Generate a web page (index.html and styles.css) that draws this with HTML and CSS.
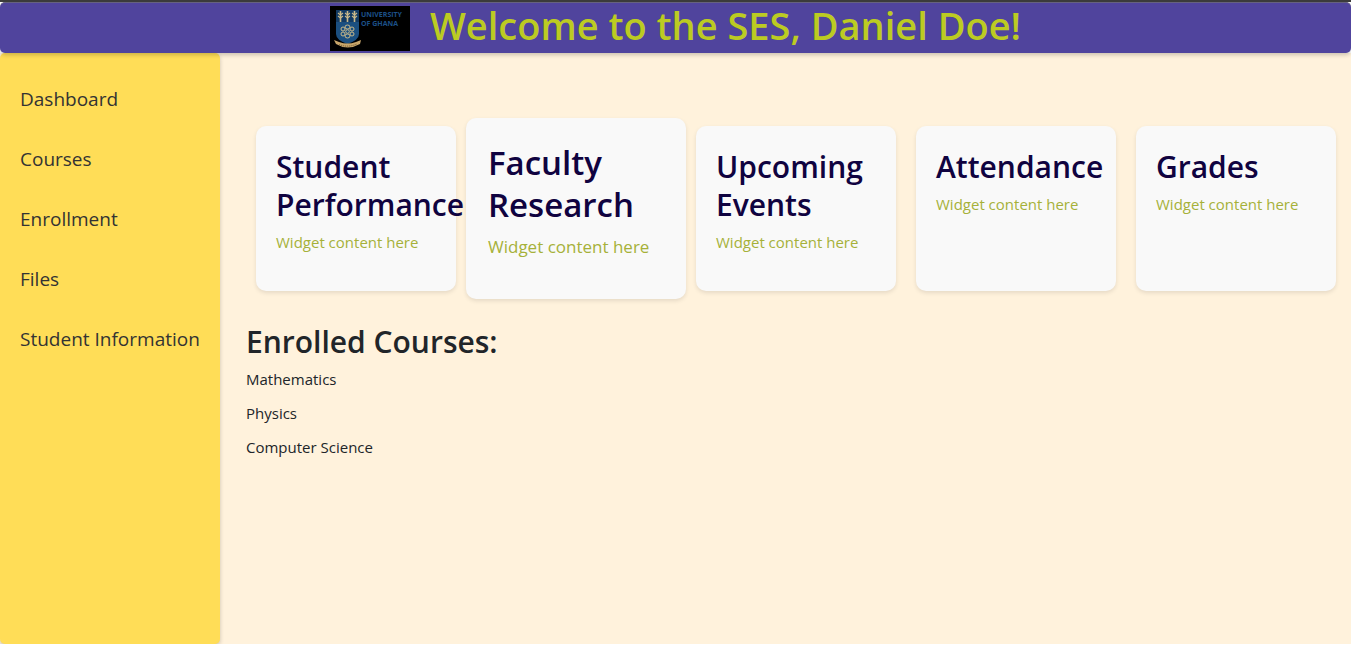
FILE: index.html
```html
<!DOCTYPE html>
<html lang="en">
<head>
<meta charset="utf-8">
<meta name="viewport" content="width=device-width, initial-scale=1">
<title>SES Dashboard</title>
<link rel="stylesheet" href="styles.css">
</head>
<body>
<header class="header">
  <svg class="logo" viewBox="0 0 80 45" role="img" aria-label="University of Ghana">
    <rect width="80" height="45" fill="#000"/>
    <path d="M6 4H29V28Q29 34 17.500 38Q6 34 6 28Z" fill="#1b4f80"/>
    <path d="M6 4H29V16H6Z" fill="#123a63"/>
    <g stroke="#c9b98a" fill="none">
      <path d="M10.500 5V16M17.500 5V16M24.500 5V16" stroke-width="1.600"/>
      <path d="M8 7l2.500 2 2.500-2M8 10l2.500 2 2.500-2M15 7l2.500 2 2.500-2M15 10l2.500 2 2.500-2M22 7l2.500 2 2.500-2M22 10l2.500 2 2.500-2" stroke-width="1.100"/>
      <circle cx="17.500" cy="25.500" r="1.800"/>
      <ellipse cx="17.500" cy="21" rx="2.500" ry="2"/>
      <ellipse cx="17.500" cy="30" rx="2.500" ry="2"/>
      <circle cx="13" cy="23" r="2"/>
      <circle cx="22" cy="23" r="2"/>
      <circle cx="13" cy="28" r="2"/>
      <circle cx="22" cy="28" r="2"/>
    </g>
    <path d="M4 34L9 36Q17.500 39 26 36L31 34L30 38Q17.500 45 6 38Z" fill="#c8a66a"/>
    <path d="M9 38.500Q17.500 42 27 38" fill="none" stroke="#66502d" stroke-width="1" stroke-dasharray="1 1"/>
    <text class="logo-text" x="31" y="11">UNIVERSITY</text>
    <text class="logo-text" x="31" y="20">OF GHANA</text>
  </svg>
  <h1 class="title">Welcome to the SES, Daniel Doe!</h1>
</header>
<div class="layout">
  <nav class="sidebar" aria-label="Main">
    <a class="nav-link" href="#dashboard">Dashboard</a>
    <a class="nav-link" href="#courses">Courses</a>
    <a class="nav-link" href="#enrollment">Enrollment</a>
    <a class="nav-link" href="#files">Files</a>
    <a class="nav-link" href="#student">Student Information</a>
  </nav>
  <main class="content">
    <div class="widgets">
      <section class="widget"><h2 class="heading">Student Performance</h2><p class="text">Widget content here</p></section>
      <section class="widget widget-active"><h2 class="heading">Faculty Research</h2><p class="text">Widget content here</p></section>
      <section class="widget"><h2 class="heading">Upcoming Events</h2><p class="text">Widget content here</p></section>
      <section class="widget"><h2 class="heading">Attendance</h2><p class="text">Widget content here</p></section>
      <section class="widget"><h2 class="heading">Grades</h2><p class="text">Widget content here</p></section>
    </div>
    <section class="enrolled">
      <h2 class="heading">Enrolled Courses:</h2>
      <ul class="courses">
        <li>Mathematics</li>
        <li>Physics</li>
        <li>Computer Science</li>
      </ul>
    </section>
  </main>
</div>
</body>
</html>
```
FILE: styles.css
```css
* { box-sizing: border-box; }

body {
  display: flex;
  flex-direction: column;
  min-height: 100vh;
  margin: 0;
  border-top: 2px solid #3b3b3b;
  border-bottom: 1px solid #fff;
  background: #fff;
  color: #212529;
  font-family: "Open Sans", sans-serif;
  font-size: 15px;
  line-height: 24px;
}

.header {
  position: relative;
  z-index: 1;
  display: flex;
  justify-content: center;
  align-items: center;
  gap: 20px;
  min-height: 51px;
  border-top: 1px solid #66627f;
  border-radius: 5px;
  background: #50449d;
  box-shadow: 0 2px 4px rgba(0, 0, 0, 0.2);
}

.logo { width: 80px; height: 45px; }

.logo-text {
  fill: #1c5088;
  font-family: "Open Sans", sans-serif;
  font-size: 7px;
  font-weight: 700;
}

.title {
  align-self: flex-start;
  margin: 0;
  color: #bccb22;
  font-size: 38px;
  font-weight: 600;
  line-height: 44px;
}

.layout {
  display: flex;
  flex: 1;
  background: #fff2dc;
}

.sidebar {
  display: flex;
  flex-direction: column;
  flex: 0 0 220px;
  gap: 20px;
  padding-top: 26px;
  border-radius: 5px;
  background: #ffdd57;
  box-shadow: 0 2px 4px rgba(0, 0, 0, 0.2);
}

.nav-link {
  padding: 5px 20px;
  color: #333;
  font-size: 19px;
  line-height: 30px;
  text-decoration: none;
  white-space: nowrap;
}

.content {
  flex: 1;
  min-width: 0;
  padding: 73px 15px 20px 26px;
}

.widgets {
  display: grid;
  grid-template-columns: repeat(5, minmax(0, 1fr));
  gap: 20px;
  padding-left: 10px;
}

.widget {
  min-height: 165px;
  padding: 22px 20px 20px;
  border-radius: 10px;
  background: #f9f9f9;
  box-shadow: 0 2px 4px rgba(0, 0, 0, 0.1);
}

.heading {
  margin: 0 0 6px;
  font-size: 30px;
  font-weight: 600;
  line-height: 38px;
}

.widget .heading { color: #100340; }

.text {
  margin: 0;
  color: #a6b139;
}

.widget-active {
  margin: -8px -10px;
  padding: 24px 22px 20px;
}

.widget-active .heading {
  margin-bottom: 8px;
  font-size: 33px;
  line-height: 42px;
}

.widget-active .text {
  font-size: 17px;
  line-height: 26px;
}

.enrolled { padding-top: 32px; }

.courses {
  display: grid;
  gap: 10px;
  margin: 0;
  padding: 0;
  list-style: none;
}
```
